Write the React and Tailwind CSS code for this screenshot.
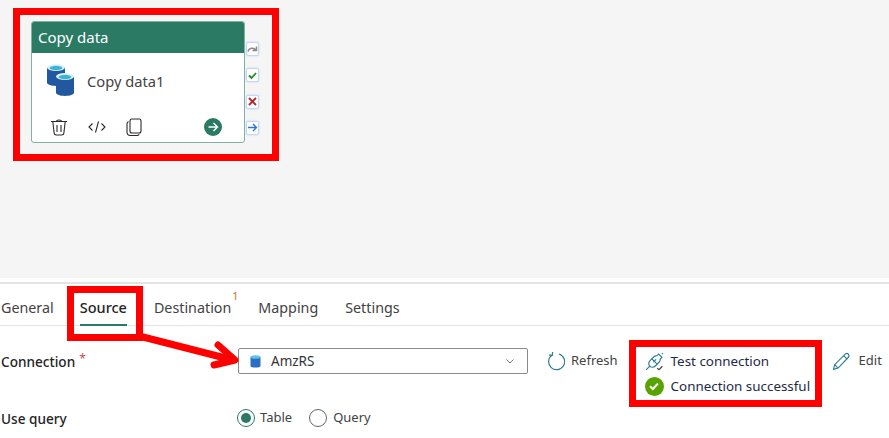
import React from "react";

const font = { fontFamily: '"Noto Sans", "Open Sans", sans-serif' };

function Port({ children }) {
  return (
    <div className="w-[13px] h-[14px] bg-white rounded-[2px] border border-[#c5d6f3] shadow-[0_0_2px_#bcd0f5] flex items-center justify-center">
      <svg width="11" height="11" viewBox="0 0 11 11" fill="none">{children}</svg>
    </div>
  );
}

function Cylinder({ x, y, w = 17, h = 20 }) {
  const ry = 3.5;
  return (
    <g>
      <path d={`M${x} ${y + ry}V${y + h - ry}C${x} ${y + h + 1} ${x + w} ${y + h + 1} ${x + w} ${y + h - ry}V${y + ry}Z`} fill="#22589f" />
      <ellipse cx={x + w / 2} cy={y + ry} rx={w / 2} ry={ry} fill="#dff4fb" />
      <ellipse cx={x + w / 2} cy={y + ry + 0.5} rx={w / 2 - 2.5} ry={ry - 1.3} fill="#3cb4d8" />
    </g>
  );
}

function Card() {
  return (
    <div className="absolute left-[31px] top-[21px] w-[214px] h-[122px] bg-white border border-[#7fb0a0] rounded-[3px] flex flex-col overflow-hidden">
      <div className="h-[31px] bg-[#2a7a64] text-white text-[15px] pl-[6px] flex items-center shrink-0">Copy data</div>
      <div className="flex items-center h-[58px] pl-[14px] gap-[11px]">
        <svg width="30" height="33" viewBox="0 0 30 33" className="-mt-[1px]">
          <Cylinder x={1} y={0} w={18} h={22} />
          <Cylinder x={10} y={9} w={18} h={23} />
        </svg>
        <span className="text-[14.7px] text-[#444] -mt-[1px]">Copy data1</span>
      </div>
      <div className="flex items-center pl-[18px] pr-[22px] h-[34px] pt-[2px]">
        <svg width="18" height="18" viewBox="0 0 18 18" fill="none" stroke="#2b2b2b" strokeWidth="1.1">
          <path d="M1 3.5h16M6.5 3.5C6.5 1.5 11.5 1.5 11.5 3.5M2.8 3.5l1.3 11.5c.1 1.2 1 2 2.2 2h5.4c1.2 0 2.1-.8 2.2-2l1.3-11.5M7 7v7M11 7v7" />
        </svg>
        <svg className="ml-[20px]" width="18" height="14" viewBox="0 0 18 14" fill="none" stroke="#2b2b2b" strokeWidth="1.1">
          <path d="M4.5 3.5L1 7l3.5 3.5M13.5 3.5L17 7l-3.5 3.5M10.5 1.5L7.5 12.5" />
        </svg>
        <svg className="ml-[20px]" width="16" height="18" viewBox="0 0 16 18" fill="none" stroke="#2b2b2b" strokeWidth="1.1">
          <rect x="4" y="1" width="11" height="14" rx="2" />
          <path d="M2.5 3.5C1.5 4 1 4.7 1 5.8V14c0 2 1.5 3.5 3.5 3.5h6.5c1 0 1.8-.5 2.2-1.3" />
        </svg>
        <div className="ml-auto w-[18px] h-[18px] rounded-full bg-[#2a7a64] flex items-center justify-center">
          <svg width="12" height="12" viewBox="0 0 12 12" fill="none" stroke="white" strokeWidth="1.4">
            <path d="M1.5 6h9M6.5 2l4 4-4 4" />
          </svg>
        </div>
      </div>
    </div>
  );
}

function Tab({ children, active, badge, className = "" }) {
  return (
    <div className={`relative h-full flex items-center pt-[7px] ${className}`}>
      <span className={`${active ? "text-[14.5px] text-[#242424] font-medium" : "text-[14.3px] text-[#424242]"}`}>{children}</span>
      {active && <div className="absolute left-0 right-0 bottom-[-1px] h-[2px] bg-[#2a7a64]" />}
      {badge && <span className="absolute right-[-7px] top-[6px] text-[10px] leading-[12px] text-[#d4622a]">{badge}</span>}
    </div>
  );
}

export default function App() {
  return (
    <div className="relative w-[889px] h-[438px] bg-white overflow-hidden" style={font}>
      {/* Pipeline canvas */}
      <div className="relative h-[278px] bg-[#f5f5f5]">
        <Card />
        <div className="absolute left-[246px] top-[42px] flex flex-col gap-[12.3px]">
          <Port><path d="M1 7.5C2 3.5 6.5 3.5 9 6M9.5 2.5v4h-4" stroke="#8a8a8a" strokeWidth="1.5" /></Port>
          <Port><path d="M2 5.5L4.5 8 9 3" stroke="#1c8a1c" strokeWidth="1.8" /></Port>
          <Port><path d="M2 2l7 7M9 2l-7 7" stroke="#b3262b" strokeWidth="1.9" /></Port>
          <Port><path d="M1 5.5h8.5M6 2l3.5 3.5L6 9" stroke="#2f74d0" strokeWidth="1.3" /></Port>
        </div>
      </div>

      {/* Properties panel */}
      <div className="mt-[4px] border-t-2 border-[#e3e3e3]">
        <div className="flex items-center h-[42px] border-b border-[#e3e3e3] pl-[1px]">
          <Tab>General</Tab>
          <Tab active className="ml-[26px]">Source</Tab>
          <Tab badge="1" className="ml-[27px]">Destination</Tab>
          <Tab className="ml-[27px]">Mapping</Tab>
          <Tab className="ml-[27px]">Settings</Tab>
        </div>

        <div className="flex items-start mt-[22px] pl-[1px]">
          <div className="w-[237px] h-[26px] flex items-center text-[13.6px] font-medium text-[#242424] pt-[2px]">
            Connection <span className="text-[12px] text-[#c4504b] font-normal relative top-[-3px] left-[4px]">*</span>
          </div>
          <div className="w-[290px] h-[26px] border border-[#8a8a8a] rounded-[2px] flex items-center pl-[11px] pr-[12px]">
            <svg width="11" height="13" viewBox="0 0 11 13">
              <path d="M0.5 2V11C0.5 13 10.5 13 10.5 11V2Z" fill="#2b6fc4" />
              <ellipse cx="5.5" cy="2" rx="5" ry="1.8" fill="#5fc2e6" />
            </svg>
            <span className="ml-[10px] text-[13.5px] text-[#333]">AmzRS</span>
            <svg className="ml-auto" width="10" height="10" viewBox="0 0 10 10" fill="none" stroke="#777" strokeWidth="1">
              <path d="M1.5 3.5L5 7l3.5-3.5" />
            </svg>
          </div>
          <div className="ml-[19px] h-[26px] flex items-center gap-[6px]">
            <svg width="18" height="20" viewBox="0 0 18 20" fill="none" stroke="#2d7d93" strokeWidth="1.2">
              <path d="M5.5 3.8A8 8 0 1 0 12 3M5.5 1v3.2H2" />
            </svg>
            <span className="text-[13px] text-[#424242]">Refresh</span>
          </div>
          <div className="ml-[27px] w-[187px] flex flex-col">
            <div className="h-[26px] flex items-center gap-[7px]">
              <svg className="shrink-0" width="19" height="19" viewBox="0 0 18 18" fill="none" stroke="#2d7d93" strokeWidth="1.1">
                <path d="M1 17l3.5-3.5C3 11.5 3.5 9.5 5 8l1.5-1.5 5 5L10 13c-1.5 1.5-3.5 2-5.5.5" />
                <path d="M8 9.5l2.5-2.5M6.5 6.5l2-2c.8-.8 1.8-1 2.5-.8M11.5 11.5l2-2c.6-.6.9-1.5.8-2.3M11 3.7L13 2l3 3-2 2.2M16 2l1-1" />
                <path d="M11.5 15.3l1.7 1.5 3.3-3.3" stroke="#424242" />
              </svg>
              <span className="text-[13.4px] text-[#1f2a44] whitespace-nowrap">Test connection</span>
            </div>
            <div className="h-[24px] flex items-center gap-[7px]">
              <div className="w-[19px] h-[19px] rounded-full bg-[#57a300] flex items-center justify-center shrink-0">
                <svg width="12" height="12" viewBox="0 0 12 12" fill="none" stroke="white" strokeWidth="2">
                  <path d="M2 6.3l2.8 2.7L10 3.5" />
                </svg>
              </div>
              <span className="text-[13.4px] text-[#1f2a44] whitespace-nowrap">Connection successful</span>
            </div>
          </div>
          <div className="h-[26px] flex items-center gap-[8px]">
            <svg width="19" height="19" viewBox="0 0 18 18" fill="none" stroke="#2d7d93" strokeWidth="1.1">
              <path d="M1.5 16.5l1-4.5L12.5 2c1-1 2.2-1 3 0s1 2 0 3L5.8 15.2zM2.5 12l3.3 3.2M11 3.5l3.5 3.5" />
            </svg>
            <span className="text-[13px] text-[#424242]">Edit</span>
          </div>
        </div>

        <div className="flex items-center h-[30px] pl-[1px] mt-[5px]">
          <div className="w-[236px] text-[13.6px] font-medium text-[#242424] pt-[2px]">Use query</div>
          <div className="w-[18px] h-[18px] rounded-full border border-[#2a7a64] flex items-center justify-center">
            <div className="w-[10px] h-[10px] rounded-full bg-[#2a7a64]" />
          </div>
          <span className="ml-[5px] text-[13px] text-[#424242]">Table</span>
          <div className="ml-[17px] w-[18px] h-[18px] rounded-full border border-[#666]" />
          <span className="ml-[6px] text-[13px] text-[#424242]">Query</span>
        </div>
      </div>

      {/* Red annotations lying over the page */}
      <div className="absolute left-[13px] top-[8px] w-[266px] h-[153px] border-[7px] border-[#ff0000]" />
      <div className="absolute left-[67px] top-[286px] w-[76px] h-[55px] border-[7px] border-[#ff0000]" />
      <div className="absolute left-[629px] top-[340px] w-[193px] h-[67px] border-[7px] border-[#ff0000]" />
      <svg className="absolute left-[135px] top-[330px]" width="105" height="45" viewBox="0 0 105 45" fill="none" stroke="#ff0000" strokeWidth="7" strokeLinecap="round" strokeLinejoin="round">
        <path d="M8 7L98 30" />
        <path d="M83 15L100 30L79 35" />
      </svg>
    </div>
  );
}
